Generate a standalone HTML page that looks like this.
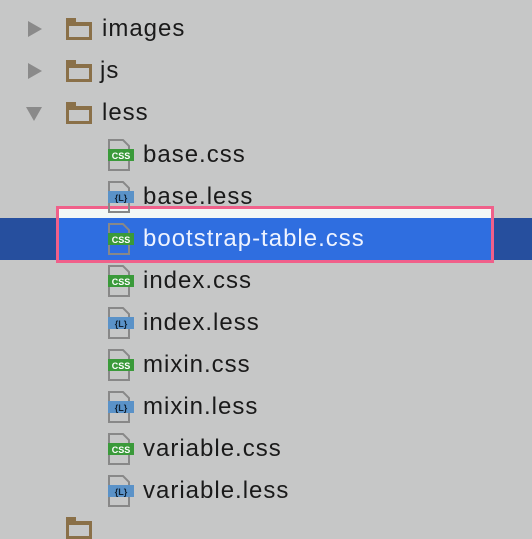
<html><head><style>
body{margin:0;width:532px;height:526px;background:#c6c7c7;position:relative;overflow:hidden;font-family:"Liberation Sans","Noto Sans CJK SC",sans-serif;}
.r{position:absolute;height:42px;line-height:42px;font-size:24px;color:#1a1a1a;letter-spacing:1px;}
.t{position:absolute;}
.fold{position:absolute;width:26px;height:18px;border:3px solid #8a7048;border-top-width:4px;box-sizing:border-box;}
.fold:before{content:"";position:absolute;left:-3px;top:-8px;width:10px;height:5px;background:#8a7048;}
</style></head><body>
<div style="position:absolute;left:0;top:218px;width:532px;height:42px;background:#264f9e"></div>
<div style="position:absolute;left:56px;top:206px;width:438px;height:57px;border:3px solid #f0608a;box-sizing:border-box;background:#2f6ee0;overflow:hidden"><div style="height:9px;background:#f4f8f6"></div></div>

<div class="t" style="left:28px;top:21px;width:0;height:0;border-left:14px solid #8a8a8a;border-top:8px solid transparent;border-bottom:8px solid transparent"></div>
<div class="fold" style="left:66px;top:22px"></div>
<div class="r" style="left:102px;top:8px">images</div>
<div class="t" style="left:28px;top:63px;width:0;height:0;border-left:14px solid #8a8a8a;border-top:8px solid transparent;border-bottom:8px solid transparent"></div>
<div class="fold" style="left:66px;top:64px"></div>
<div class="r" style="left:100px;top:50px">js</div>
<div class="t" style="left:26px;top:107px;width:0;height:0;border-top:14px solid #8a8a8a;border-left:8px solid transparent;border-right:8px solid transparent"></div>
<div class="fold" style="left:66px;top:106px"></div>
<div class="r" style="left:102px;top:92px">less</div>

<svg width="532" height="526" style="position:absolute;left:0;top:0">
<defs>
<g id="c"><path d="M1 0h14l6 6v24H1z" fill="none" stroke="#888" stroke-width="2"/><rect x="0" y="9" width="26" height="12" fill="#3a9a3a"/><text x="13" y="19" font-size="9" font-family="Liberation Sans" font-weight="bold" fill="#fff" text-anchor="middle">CSS</text></g>
<g id="l"><path d="M1 0h14l6 6v24H1z" fill="none" stroke="#888" stroke-width="2"/><rect x="0" y="9" width="26" height="12" fill="#5a92c8"/><text x="13" y="19" font-size="9" font-family="Liberation Sans" font-weight="bold" fill="#123" text-anchor="middle">{L}</text></g>
</defs>
<use href="#c" x="108" y="140"/><use href="#l" x="108" y="182"/><use href="#c" x="108" y="224"/>
<use href="#c" x="108" y="266"/><use href="#l" x="108" y="308"/><use href="#c" x="108" y="350"/>
<use href="#l" x="108" y="392"/><use href="#c" x="108" y="434"/><use href="#l" x="108" y="476"/>
</svg>
<div class="r" style="left:143px;top:134px">base.css</div>
<div class="r" style="left:143px;top:176px">base.less</div>
<div class="r" style="left:143px;top:218px;color:#eef3ff">bootstrap-table.css</div>
<div class="r" style="left:143px;top:260px">index.css</div>
<div class="r" style="left:143px;top:302px">index.less</div>
<div class="r" style="left:143px;top:344px">mixin.css</div>
<div class="r" style="left:143px;top:386px">mixin.less</div>
<div class="r" style="left:143px;top:428px">variable.css</div>
<div class="r" style="left:143px;top:470px">variable.less</div>
<div class="fold" style="left:66px;top:521px"></div>
</body></html>
